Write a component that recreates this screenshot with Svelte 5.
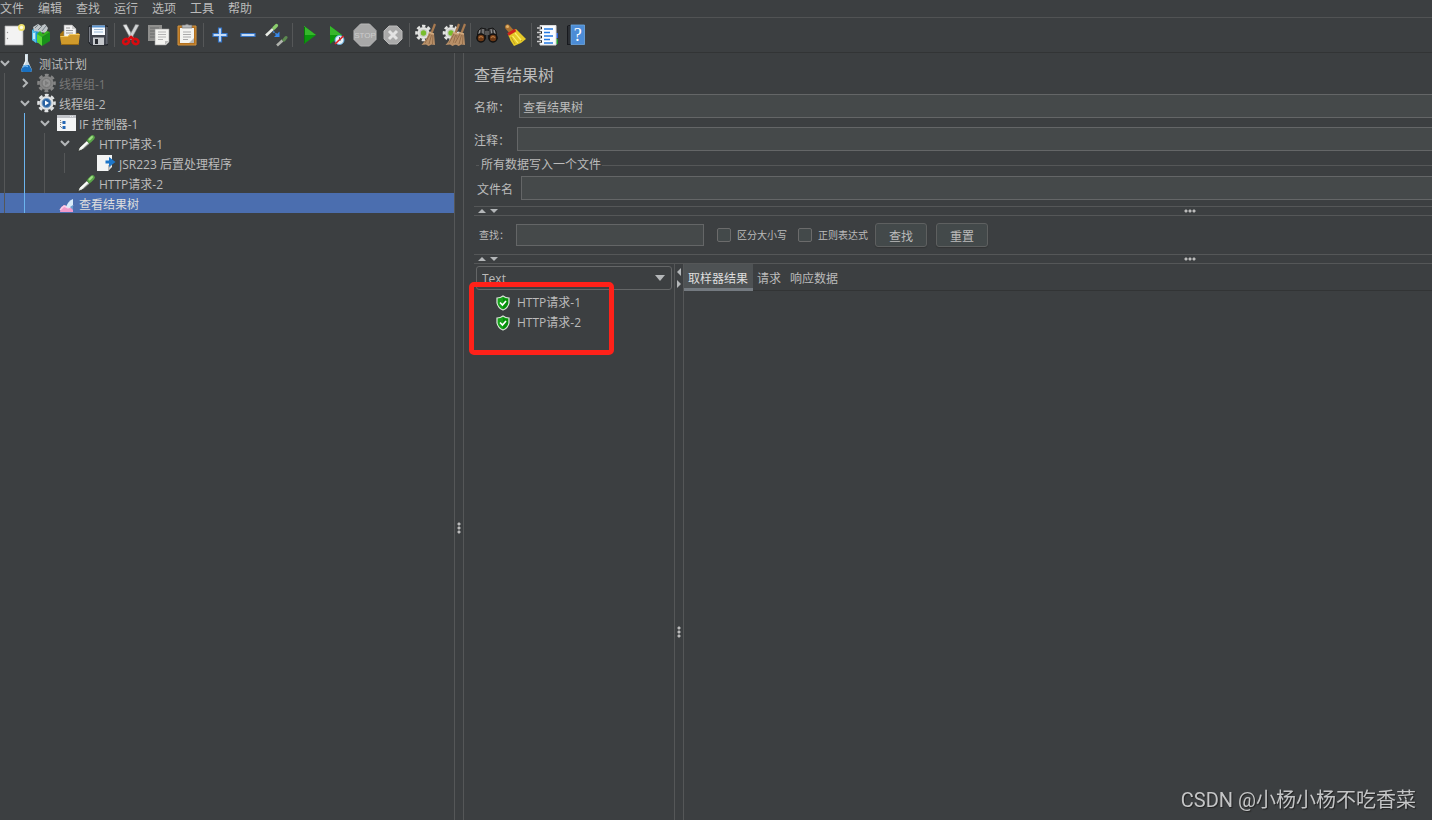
<script>
  const menus = ['文件', '编辑', '查找', '运行', '选项', '工具', '帮助'];

  const toolbar = [
    [['new', '新建'], ['templates', '模板'], ['open', '打开'], ['save', '保存']],
    [['cut', '剪切'], ['copy', '复制'], ['paste', '粘贴']],
    [['plus', '展开全部'], ['minus', '折叠全部'], ['toggle', '切换']],
    [['start', '启动'], ['startNoPause', '不停顿启动'], ['stop', '停止'], ['shutdown', '关闭']],
    [['clear', '清除'], ['clearAll', '清除全部']],
    [['search', '查找'], ['searchReset', '重置查找']],
    [['functions', '函数助手'], ['help', '帮助']]
  ];

  const nodes = [
    { label: '测试计划', depth: 0, icon: 'plan', arrow: 'open' },
    { label: '线程组-1', depth: 1, icon: 'threadOff', arrow: 'closed', disabled: true },
    { label: '线程组-2', depth: 1, icon: 'thread', arrow: 'open' },
    { label: 'IF 控制器-1', depth: 2, icon: 'controller', arrow: 'open' },
    { label: 'HTTP请求-1', depth: 3, icon: 'sampler', arrow: 'open' },
    { label: 'JSR223 后置处理程序', depth: 4, icon: 'post' },
    { label: 'HTTP请求-2', depth: 3, icon: 'sampler' },
    { label: '查看结果树', depth: 2, icon: 'listener' }
  ];

  const samples = ['HTTP请求-1', 'HTTP请求-2'];
  const tabs = ['取样器结果', '请求', '响应数据'];

  let selected = $state(7);
  let activeTab = $state(0);
  let name = $state('查看结果树');
  let comment = $state('');
  let filename = $state('');
  let query = $state('');
  let caseSensitive = $state(false);
  let regex = $state(false);

  // eight teeth drawn as a dashed ring round the disc
  const gear = (x, y, r, fill) => {
    const step = (r + 1) * Math.PI / 4;
    return `<circle cx="${x}" cy="${y}" r="${r}" fill="${fill}"/><circle cx="${x}" cy="${y}" r="${r + 1}" fill="none" stroke="${fill}" stroke-width="2.600" stroke-dasharray="${step * 0.6} ${step * 0.4}" stroke-dashoffset="${step * 0.3}"/>`;
  };

  const broom = (x) =>
    `<g transform="translate(${x} 0)"><path d="M20 1 16.500 10" stroke="#a87a50" stroke-width="2.200"/><path d="M14 9 19 10.500 20 22 16.500 21.500 13.500 23 11 21.500 6.500 22Q12 16 14 9Z" fill="#b99068"/><path d="M15 11 10 20M16.500 12 14 21M18 12 17.500 21" stroke="#8a6543" stroke-width=".8"/><path d="M14 9.500 19 11" stroke="#d8b286" stroke-width="1.200"/></g>`;

  const pipette =
    '<path d="M2 18.500 3 15 11 7.500 14 10.500 6 17Z" fill="#dfe4df" stroke="#2c2e2c" stroke-width=".8"/><path d="M4.500 15.500 11.500 9" stroke="#fff" stroke-width="1.500"/><path d="M7 16 13 10.500" stroke="#858b85"/><path d="M10.500 6.500 14.500 10.500" stroke="#38582f" stroke-width="1.500"/><path d="M13.500 7.500 16.500 4.500" stroke="#5aa54a" stroke-width="4.600" stroke-linecap="round"/><path d="M13.500 6.500 16 4" stroke="#a2df86" stroke-width="1.900" stroke-linecap="round"/>';

  const icons = {
    new: '<path d="M3 3H21V22H3Z" fill="#eee" stroke="#aaa" stroke-width=".7"/><path d="M4 4H19V21H4Z" fill="#f3f3f3"/><circle cx="5.500" cy="9.500" r=".7" fill="#999"/><circle cx="5.500" cy="15.500" r=".7" fill="#999"/><circle cx="19.500" cy="4.500" r="3.500" fill="#eee16c"/><circle cx="19.500" cy="4.500" r="1.700" fill="#fffde0"/>',
    templates: '<path d="M2 7 7 3 12 7V19L7 20 2 17Z" fill="#1d94d0"/><path d="M2 7 6 9V20L2 17Z" fill="#54bde9"/><path d="M3 4 8 1 11 3 15 1 18 5 16 10 4 8Z" fill="#bfc5c8"/><path d="M5 5 8 2M8 7 12 3M12 8 16 3" stroke="#758086"/><path d="M7 11 12 14V23L7 19Z" fill="#59d535"/><path d="M12 14 20 9V18L12 23Z" fill="#18911a"/><path d="M7 11 10 8 13 11 17 8 20 9 12 14Z" fill="#35b31f"/><path d="M4 10V16" stroke="#e8faff" stroke-width="1.500"/>',
    open: '<path d="M2 11 5 8H8L9 10H21V20H3Z" fill="#a97511"/><path d="M6 2H14L18 6V15H6Z" fill="#f3f3f3" stroke="#999" stroke-width=".6"/><path d="M14 2V6H18" fill="#ccc"/><path d="M8 5H12M8 7.500H15M8 10H15" stroke="#999"/><path d="M2 13H10L12 11H22L20.500 22H3.500Z" fill="#d09a2b"/><path d="M2.500 13.500H10L12 11.500H21.500" fill="none" stroke="#f3cb65"/><path d="M3.500 21.500H20.500" stroke="#966813"/>',
    save: '<path d="M3 3H21.500V22H5L3 20Z" fill="#40444d" stroke="#1d2026"/><path d="M3.500 4V19M21 4V21" stroke="#7a7e87"/><path d="M6 2.500H19V12H6Z" fill="#f7fbff"/><path d="M6 2.500H19V4.500H6Z" fill="#5a94d0"/><path d="M8 6.500H17M8 9H17" stroke="#9ab9d6"/><path d="M7 14.500H18V22H7Z" fill="#c5c8cc"/><path d="M9 16H12V21H9Z" fill="#282b31"/>',
    cut: '<path d="M4 2 7.500 1.500 15 15.500 12 16.500Z" fill="#e4e6e7" stroke="#888" stroke-width=".5"/><path d="M20 2 16.500 1.500 9 15.500 12 16.500Z" fill="#cfd2d4" stroke="#888" stroke-width=".5"/><g fill="none" stroke="#d90b10" stroke-width="2.600"><ellipse cx="7" cy="18.500" rx="3" ry="2.500" transform="rotate(-25 7 18.500)"/><ellipse cx="16.500" cy="18.500" rx="3" ry="2.500" transform="rotate(25 16.500 18.500)"/><path d="M9 16.500 12 14 15 16.500"/></g>',
    copy: '<path d="M1 2H15V18H1Z" fill="#8f8f8d"/><path d="M3 5H12M3 8H12M3 11H9M3 14H9" stroke="#696b6a"/><path d="M8 6H22V19L19 22H8Z" fill="#f3f3f0" stroke="#999" stroke-width=".6"/><path d="M11 9H19M11 11.500H19M11 14H19M11 16.500H16" stroke="#b4b4b4"/><path d="M22 18H18V22Z" fill="#bbb"/>',
    paste: '<path d="M3 3H21V22H3Z" fill="#b4711d" stroke="#d29542"/><path d="M5 5H19V20H5Z" fill="#f4f4f1"/><path d="M7 2H10L12 1 14 2H17V5H7Z" fill="#b7b9bb" stroke="#666" stroke-width=".6"/><path d="M8 9H16M8 11.500H16M8 14H16M8 16.500H13" stroke="#aaa"/><path d="M19 15 14 20H19Z" fill="#b9bab8"/>',
    plus: '<path d="M10.500 5H13.500V10.500H19V13.500H13.500V19H10.500V13.500H5V10.500H10.500Z" fill="#c5dcf6" stroke="#3474c6" stroke-width="1.200"/>',
    minus: '<path d="M5 10.500H19V13.500H5Z" fill="#c5dcf6" stroke="#3474c6" stroke-width="1.200"/>',
    toggle: '<path d="M2 12.500 9.500 5.500" stroke="#e8ebe5" stroke-width="2.600"/><path d="M8.500 4.500 11 7" stroke="#38582f" stroke-width="1.300"/><path d="M10 5 12.500 2.500" stroke="#8acc6c" stroke-width="3.200" stroke-linecap="round"/><path d="M9 8.500 14 12.500" stroke="#3f86dc" stroke-width="1.600" stroke-dasharray="2 1"/><path d="M15.500 8.500V14H10Z" fill="#368af0"/><path d="M13 22.500 19 17" stroke="#b0b3ad" stroke-width="2.600"/><path d="M18 16 20.500 18.500" stroke="#38582f" stroke-width="1.300"/><path d="M20 17 22 14.500" stroke="#5d8a50" stroke-width="3" stroke-linecap="round"/>',
    start: '<path d="M7 3 19 12 7 21Z" fill="#0b970d"/><path d="M7 3 19 12H7Z" fill="#36b72b"/><path d="M7.500 4V20" stroke="#087b09"/>',
    startNoPause: '<path d="M5 3 17 12 5 21Z" fill="#0b970d"/><path d="M5 3 17 12H5Z" fill="#36b72b"/><circle cx="14.500" cy="17" r="4.500" fill="#e5f2fa" stroke="#5eaadd"/><path d="M14.500 17V14M14.500 17H16" stroke="#526979"/><path d="M10 21 18.500 13" stroke="#de2424" stroke-width="1.700"/>',
    stop: '<path d="M7.500 1H16.500L23 7.500V16.500L16.500 23H7.500L1 16.500V7.500Z" fill="#a8a8a8" stroke="#b8b8b8"/><text x="12" y="15" text-anchor="middle" font-family="Liberation Sans" font-size="8" fill="#cdcdcd">STOP</text>',
    shutdown: '<path d="M8 3H16L21 8V16L16 21H8L3 16V8Z" fill="#aaa" stroke="#b9b9b9"/><path d="M8 8 16 16M16 8 8 16" stroke="#e3e3e3" stroke-width="3"/>',
    clear: gear(9.5, 10, 6, '#e3e4e2') + '<circle cx="9.500" cy="10" r="4" fill="#c9ccc7"/><circle cx="9.500" cy="10" r="2.700" fill="#78bd2c"/>' + broom(1),
    clearAll: gear(9, 10, 6, '#e3e4e2') + '<circle cx="9" cy="10" r="4" fill="#c9ccc7"/><circle cx="9" cy="10" r="2.700" fill="#78bd2c"/>' + broom(-3) + broom(3),
    search: '<path d="M3 8 6 5 11 6 10 16H2Z" fill="#3c3c3d" stroke="#161616"/><path d="M21 8 18 5 13 6 14 16H22Z" fill="#3c3c3d" stroke="#161616"/><path d="M5 7 4 11M8 6 8 12M16 6 17 12M19 7 20 11" stroke="#929292" stroke-width="1.200"/><path d="M10 8H14V12H10Z" fill="#555"/><circle cx="6" cy="15" r="4" fill="#6b3815" stroke="#111" stroke-width="1.500"/><circle cx="18" cy="15" r="4" fill="#6b3815" stroke="#111" stroke-width="1.500"/><path d="M4 15Q6 12 8 15M16 15Q18 12 20 15" fill="none" stroke="#b0733f" stroke-width="1.300"/>',
    searchReset: '<path d="M4.500 4 8 8" stroke="#a87030" stroke-width="5" stroke-linecap="round"/><circle cx="4.500" cy="3.500" r="1.500" fill="#dfb16a"/><path d="M5 11 13 6 23 16 18 20 11 23Q7 18 5 11Z" fill="#e5c928"/><path d="M8 14 12 21M13 12 19 18" stroke="#b8961a" stroke-width=".8"/><path d="M9.500 13 15 20M12 10 18 17" stroke="#fff16b" stroke-width="1.200"/><path d="M5 11.500 12.500 7" stroke="#cf241d" stroke-width="3"/>',
    functions: '<path d="M18 10H22V15H18Z" fill="#285fd0"/><path d="M18 16H22V21H18Z" fill="#1c9b2b"/><path d="M4 2.500H20V22H4Z" fill="#fafcff" stroke="#ddd"/><path d="M8 6H17M8 9.500H14M8 13H17M8 16.500H14M8 20H17" stroke="#2479e2" stroke-width="1.500"/><path d="M3 5H6M3 9.500H6M3 14H6M3 18.500H6" stroke="#222" stroke-width="2.500"/><path d="M1 5H5M1 9.500H5M1 14H5M1 18.500H5" stroke="#ccc" stroke-width="1.400"/>',
    help: '<path d="M3 3 5 2H20V22H3Z" fill="#17191d"/><path d="M7 2H20.500V21.500H7Z" fill="#4c8cd6" stroke="#70aae1" stroke-width=".8"/><path d="M5 3V21" stroke="#42464d"/><text x="13.800" y="18" text-anchor="middle" font-family="Liberation Serif" font-size="18" fill="#fff">?</text>',
    plan: '<path d="M9 1H12V8L16 17Q16 19 14 19H7Q5 19 5 17L9 8Z" fill="#c9d9e2"/><path d="M8 12H13L16 17Q16 19 14 19H7Q5 19 5 17Z" fill="#1970c0"/><path d="M7 14 9 12.500 12 13.500" fill="none" stroke="#71b8ef" stroke-width="1.500"/><path d="M10 2V8L8 12" fill="none" stroke="#fff"/>',
    threadOff: gear(10.5, 10, 7, '#858585') + '<circle cx="10.500" cy="10" r="4.500" fill="#939393" stroke="#727272"/><path d="M9 7.500 13 10 9 12.500Z" fill="#7c7c7c"/>',
    thread: gear(10.5, 10, 7, '#e1e3e4') + '<circle cx="10.500" cy="10" r="4.500" fill="#2861a1" stroke="#749bc1"/><path d="M9 7.500 13 10 9 12.500Z" fill="#fff"/>',
    controller: '<path d="M1 2H20V18H1Z" fill="#f3f4f5"/><path d="M1 2H20V5H1Z" fill="#c1c3c8"/><path d="M14 3.500H18" stroke="#e9eaec" stroke-dasharray="1 1"/><path d="M4.500 7V14.500H7M4.500 9.500H7" fill="none" stroke="#888" stroke-dasharray="1 1"/><path d="M6.500 8H9.500V11H6.500ZM6.500 13H9.500V16H6.500Z" fill="#2466b4"/>',
    sampler: pipette,
    post: '<path d="M1 2H16V14L12 18H1Z" fill="#f3f4f4"/><path d="M16 12H12V18Z" fill="#bbb"/><path d="M9.500 7.500H13V4L19.500 9 13 14V10.500H9.500Z" fill="#1d75c8"/>',
    listener: '<path d="M4 19 5 14 9 12 12 14 17 11V19Z" fill="#f19bca"/><path d="M4 17 8 13 12 15 17 12" fill="none" stroke="#ffcee8" stroke-width="1.500"/><path d="M10 14Q12 8 17 6V13L14 15Z" fill="#d8ecfa"/><path d="M14 14 17 12V17" fill="#6a9ed0"/>',
    shield: '<path d="M7 1Q9.500 3 13 3V8Q12 13 7 15Q2 13 1 8V3Q4.500 3 7 1Z" fill="#17a31b" stroke="#dce8dc" stroke-width="1.200"/><path d="M7 2.500Q9 4 12 4V8Q11 12 7 14Z" fill="#07900c"/><path d="M4 7.500 6.500 10 10 6" fill="none" stroke="#fff" stroke-width="1.700"/>'
  };

  function draw(key, w, h) {
    return `<svg width="${w}" height="${h}" viewBox="0 0 ${w} ${h}" fill="none" aria-hidden="true">${icons[key]}</svg>`;
  }
</script>

<div class="app">
  <nav class="menubar">
    {#each menus as m}
      <button>{m}</button>
    {/each}
  </nav>

  <div class="toolbar">
    {#each toolbar as group}
      <div class="group">
        {#each group as [key, title]}
          <button {title} aria-label={title}>{@html draw(key, 24, 24)}</button>
        {/each}
      </div>
    {/each}
  </div>

  <div class="body">
    <div class="tree" role="tree">
      {#each nodes as node, i}
        <div class="node" class:selected={selected === i} class:disabled={node.disabled} role="treeitem" tabindex="-1" aria-selected={selected === i} onclick={() => selected = i} onkeydown={(e) => { if (e.key === 'Enter') selected = i; }}>
          {#each { length: node.depth } as _, d}
            <span class="guide" class:active={d === 1}></span>
          {/each}
          <span class="arrow">
            {#if node.arrow}
              <svg class:closed={node.arrow === 'closed'} width="10" height="10" viewBox="0 0 10 10"><path d="M1 3 5 7 9 3" fill="none" stroke="#b4b7b9" stroke-width="2" /></svg>
            {/if}
          </span>
          <span class="node-icon">{@html draw(node.icon, 20, 20)}</span>
          <span class="node-label">{node.label}</span>
        </div>
      {/each}
    </div>

    <div class="split vertical main-split"><span class="grip"></span></div>

    <main>
      <h1>查看结果树</h1>
      <div class="field name"><label for="name">名称：</label><input id="name" type="text" bind:value={name} /></div>
      <div class="field comment"><label for="comment">注释：</label><input id="comment" type="text" bind:value={comment} /></div>
      <fieldset>
        <legend>所有数据写入一个文件</legend>
        <div class="field file"><label for="filename">文件名</label><input id="filename" type="text" bind:value={filename} /></div>
      </fieldset>

      {@render horizontalSplit()}

      <div class="search">
        <label class="query" for="query">查找：</label>
        <input id="query" type="text" bind:value={query} />
        <label class="check"><input type="checkbox" bind:checked={caseSensitive} />区分大小写</label>
        <label class="check"><input type="checkbox" bind:checked={regex} />正则表达式</label>
        <button>查找</button>
        <button>重置</button>
      </div>

      {@render horizontalSplit()}

      <div class="results">
        <div class="samples">
          <div class="select">
            <select aria-label="Text">
              <option>Text</option>
              <option>JSON</option>
              <option>XML</option>
            </select>
            <svg width="10" height="6" viewBox="0 0 10 6"><path d="M0 0H10L5 6Z" fill="#b4b7b9" /></svg>
          </div>
          <ul>
            {#each samples as s}
              <li>{@html draw('shield', 14, 16)}{s}</li>
            {/each}
          </ul>
          <div class="highlight"></div>
        </div>

        <div class="split vertical result-split">
          <svg class="ends" width="8" height="20" viewBox="0 0 8 20"><path d="M6 0V8L2 4ZM2 12V20L6 16Z" fill="#b4b7b9" /></svg>
          <span class="grip"></span>
        </div>

        <div class="detail">
          <div class="tabs" role="tablist">
            {#each tabs as t, i}
              <button role="tab" aria-selected={activeTab === i} class:active={activeTab === i} onclick={() => activeTab = i}>{t}</button>
            {/each}
          </div>
        </div>
      </div>
    </main>
  </div>

  <div class="watermark">CSDN @小杨小杨不吃香菜</div>
</div>

{#snippet horizontalSplit()}
  <div class="split horizontal">
    <svg width="20" height="6" viewBox="0 0 20 6"><path d="M0 5H8L4 1ZM12 1H20L16 5Z" fill="#b4b7b9" /></svg>
    <span class="grip"></span>
  </div>
{/snippet}

<style>
  :global(body) { margin: 0; background: #3c3f41; }
  .app { --line: #555758; --border: #646667; --field: #45494a; height: 100vh; display: flex; flex-direction: column; overflow: hidden; background: #3c3f41; color: #bbb; font: 12px/16px 'Open Sans', 'Noto Sans CJK SC', sans-serif; }
  .app * { box-sizing: border-box; }
  button, input, select { font: inherit; color: inherit; margin: 0; padding: 0; border: 0; background: none; border-radius: 0; outline: none; }

  .menubar { display: flex; gap: 14px; height: 18px; border-bottom: 1px solid #515354; }
  .menubar button { height: 17px; line-height: 17px; }
  .toolbar { display: flex; height: 35px; border-bottom: 1px solid #323435; }
  .group { display: flex; align-items: center; }
  .group + .group { padding-left: 5px; background: linear-gradient(#555758, #555758) 2px 5px / 1px 24px no-repeat; }
  .group button { display: flex; align-items: center; justify-content: center; width: 28px; height: 28px; }

  .body { flex: 1; display: flex; min-height: 0; }
  .tree { width: 454px; flex: none; }
  .node { display: flex; align-items: center; height: 20px; white-space: nowrap; cursor: default; }
  .node.selected { background: #4b6eaf; color: #ddd; }
  .node.disabled { color: #777; }
  .guide { width: 20px; height: 20px; background: linear-gradient(#555758, #555758) 4px 0 / 1px 20px no-repeat; }
  .guide.active { background-image: linear-gradient(#6cb4ee, #6cb4ee); }
  .arrow { width: 10px; height: 10px; margin-right: 6px; }
  .arrow svg { display: block; }
  .arrow .closed { transform: rotate(-90deg); }
  .node-icon { width: 20px; height: 20px; margin-right: 3px; }
  .node-label { padding-top: 3px; }

  .split { display: flex; flex: none; align-items: center; }
  .vertical { flex-direction: column; width: 10px; border-left: 1px solid var(--line); border-right: 1px solid var(--line); }
  .horizontal { height: 10px; border-top: 1px solid var(--line); border-bottom: 1px solid var(--line); padding-left: 4px; }
  .grip { flex: none; width: 4px; height: 12px; background: radial-gradient(circle, #bbb 1px, transparent 2px) 0 0 / 4px 4px; }
  .main-split::before { content: ''; flex: 469; }
  .main-split::after { content: ''; flex: 286; }
  .result-split::before { content: ''; flex: 337; order: 1; }
  .result-split::after { content: ''; flex: 182; order: 3; }
  .result-split .ends { flex: none; margin-top: 4px; }
  .result-split .grip { order: 2; }
  .horizontal::before { content: ''; flex: 686; order: 1; }
  .horizontal::after { content: ''; flex: 236; order: 3; }
  .horizontal .grip { order: 2; width: 12px; height: 4px; }

  main { flex: 1; min-width: 0; display: flex; flex-direction: column; padding-left: 10px; }
  h1 { margin: 11px 0 8px; font-size: 16px; line-height: 22px; font-weight: 400; }
  .field { display: flex; align-items: center; height: 24px; }
  .field label { flex: none; padding-top: 3px; }
  .field input { flex: 1; min-width: 0; height: 24px; padding: 2px 3px 0; background: var(--field); border: 1px solid var(--border); border-right: 0; }
  .name label { width: 45px; }
  .comment { margin-top: 9px; }
  .comment label { width: 43px; }
  fieldset { margin: 6px 0 0 2px; padding: 3px 0 6px; border: 0 solid var(--line); border-top-width: 1px; min-width: 0; }
  legend { margin-left: 3px; padding: 0 1px 0 2px; line-height: 16px; }
  .file label { width: 45px; padding-left: 1px; }

  .search { display: flex; align-items: center; height: 38px; padding-left: 5px; font-size: 10px; }
  .query { width: 37px; white-space: nowrap; }
  #query { width: 188px; height: 22px; margin-right: 13px; padding: 0 3px; background: var(--field); border: 1px solid var(--border); }
  .check { display: flex; align-items: center; width: 81px; white-space: nowrap; }
  .check + button { margin-right: 9px; }
  .check input { appearance: none; width: 14px; height: 14px; margin-right: 6px; background: #43494a; border: 1px solid #6b6b6b; border-radius: 2px; }
  .check input:checked { background: #4b6eaf; }
  .search button { width: 52px; height: 24px; padding-top: 3px; font-size: 12px; background: #43494a; border: 1px solid #5e6060; border-radius: 3px; box-shadow: 0 1px 1px #333536; }
  .search .check + .check { width: 77px; }

  .results { flex: 1; display: flex; min-height: 0; }
  .samples { position: relative; width: 200px; flex: none; padding: 2px 2px 0; }
  .select { display: flex; align-items: center; height: 24px; border: 1px solid #646667; border-radius: 3px; padding-right: 6px; }
  .select select { flex: 1; appearance: none; padding: 2px 0 0 5px; height: 22px; }
  .select svg { pointer-events: none; }
  option { background: #3c3f41; }
  ul { list-style: none; margin: 3px 0 0; padding: 0 0 0 20px; }
  li { display: flex; align-items: center; gap: 7px; height: 20px; }
  .highlight { position: absolute; left: -5px; top: 18px; width: 145px; height: 73px; border: 5px solid #ff2119; border-radius: 5px; pointer-events: none; }

  .detail { flex: 1; min-width: 0; }
  .tabs { display: flex; height: 27px; border-bottom: 1px solid #323435; }
  .tabs button { height: 27px; padding: 5px 5px 0 4px; border-bottom: 3px solid transparent; }
  .tabs button.active { background: #4e5254; border-bottom-color: #747a80; color: #ddd; }

  .watermark { position: fixed; right: 16px; bottom: 6px; font-family: Roboto, 'Noto Sans CJK SC', sans-serif; font-size: 20px; line-height: 28px; color: #c4c5c6; text-shadow: 1px 1px 1px #222; white-space: nowrap; pointer-events: none; }
</style>
